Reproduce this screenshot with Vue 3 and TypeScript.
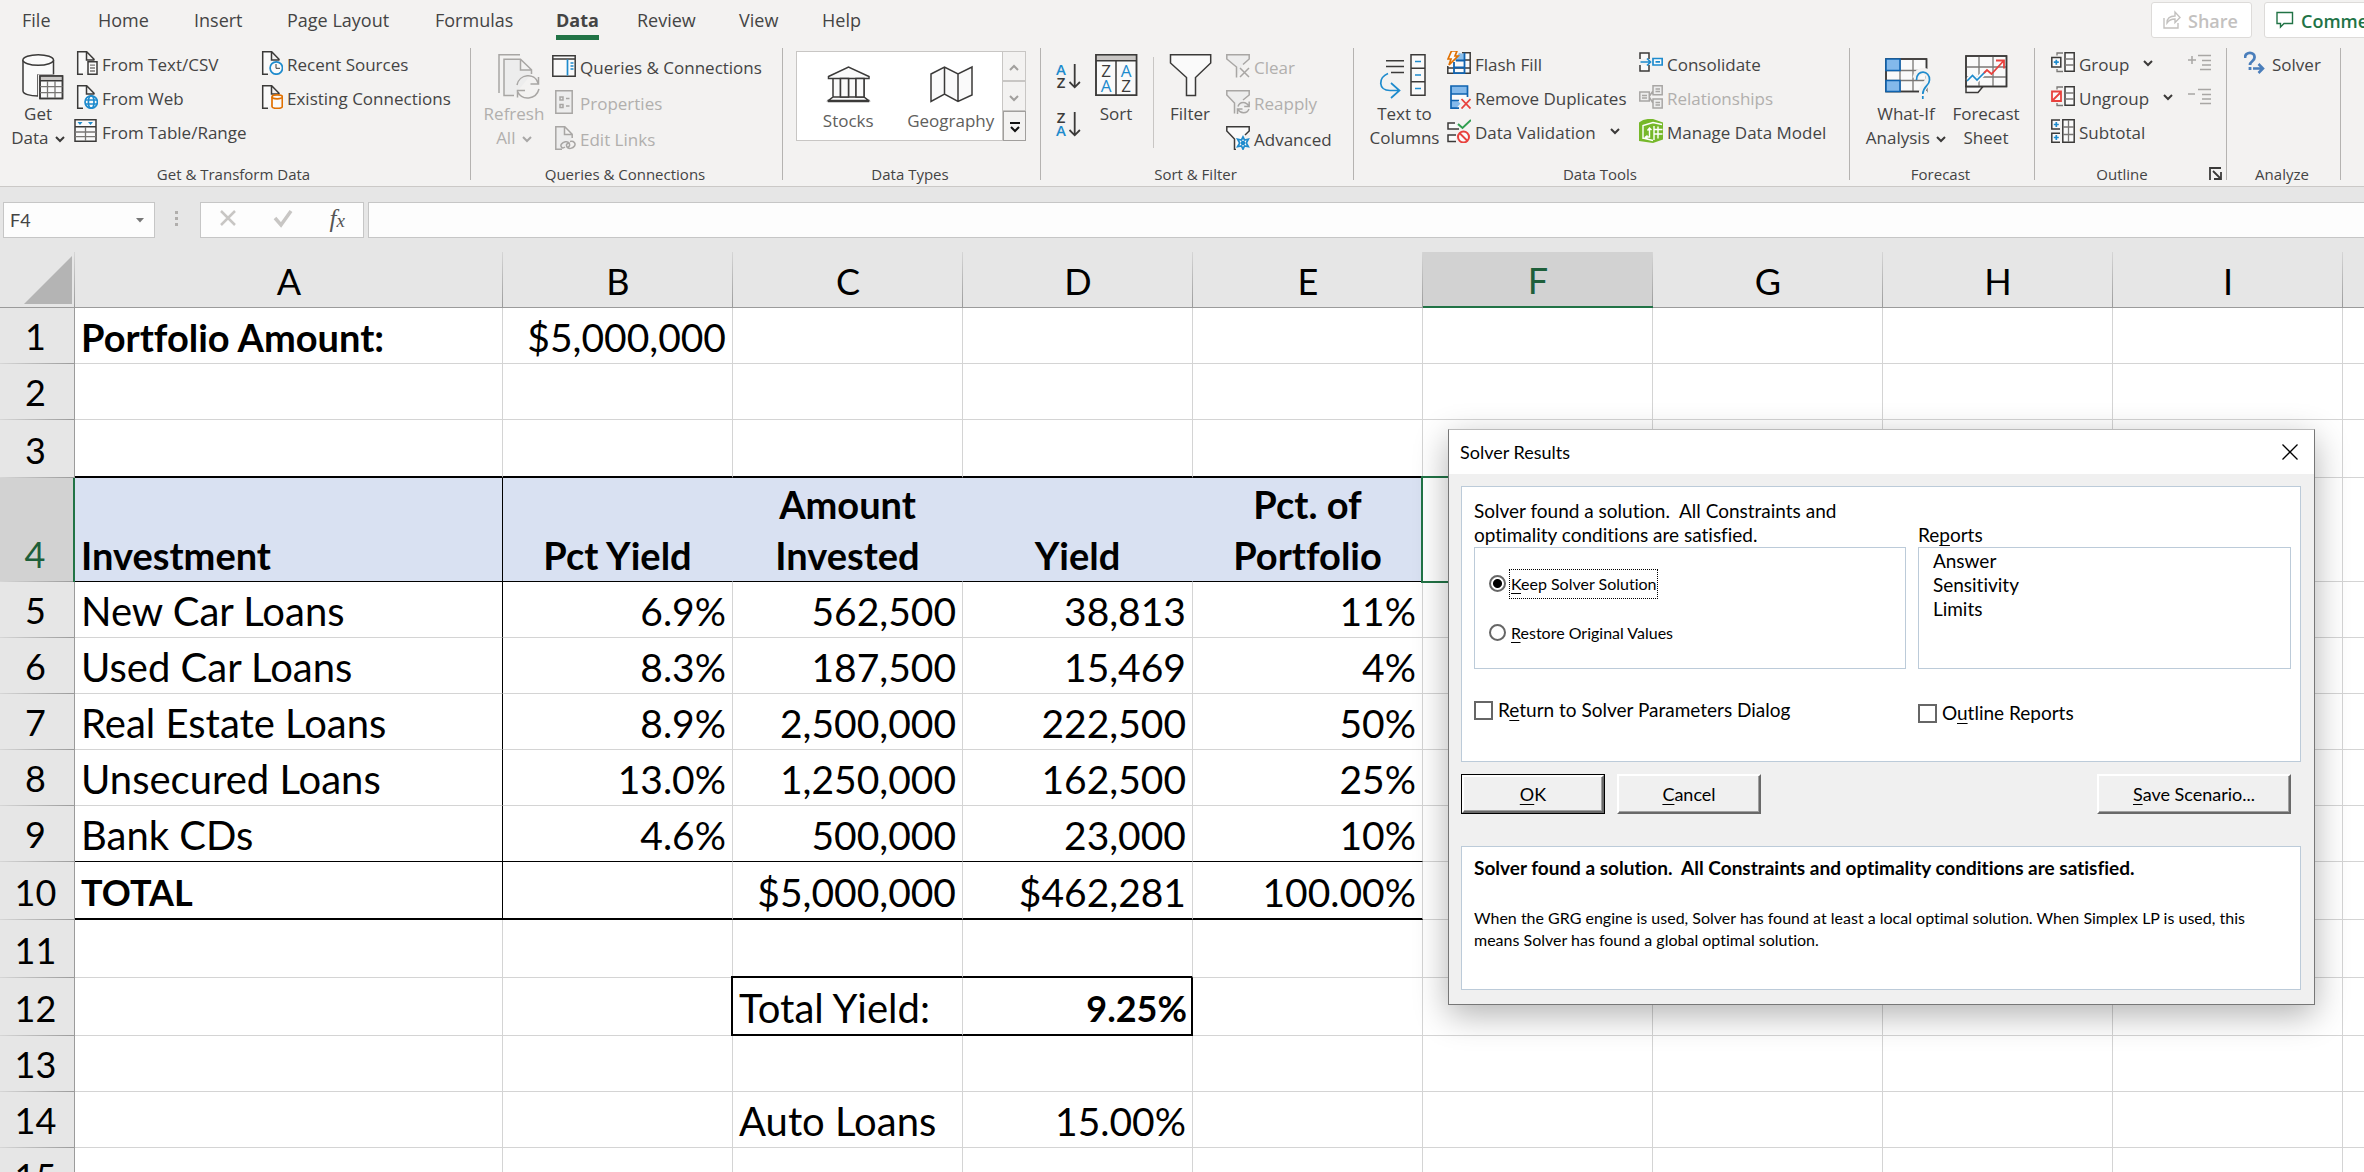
<script setup lang="ts">
import { ref } from 'vue'

interface Command {
  icon: string
  label: string
  disabled?: boolean
  menu?: boolean
}

interface Cell {
  text?: string
  kind?: string
}

const tabs = ['File', 'Home', 'Insert', 'Page Layout', 'Formulas', 'Data', 'Review', 'View', 'Help']
const activeTab = ref('Data')

const importCommands: Command[] = [
  { icon: 'csv', label: 'From Text/CSV' },
  { icon: 'web', label: 'From Web' },
  { icon: 'table', label: 'From Table/Range' },
]
const sourceCommands: Command[] = [
  { icon: 'recent', label: 'Recent Sources' },
  { icon: 'existing', label: 'Existing Connections' },
]
const queryCommands: Command[] = [
  { icon: 'queries', label: 'Queries & Connections' },
  { icon: 'properties', label: 'Properties', disabled: true },
  { icon: 'links', label: 'Edit Links', disabled: true },
]
const filterCommands: Command[] = [
  { icon: 'clear', label: 'Clear', disabled: true },
  { icon: 'reapply', label: 'Reapply', disabled: true },
  { icon: 'advanced', label: 'Advanced' },
]
const toolCommands: Command[] = [
  { icon: 'flash', label: 'Flash Fill' },
  { icon: 'duplicates', label: 'Remove Duplicates' },
  { icon: 'validation', label: 'Data Validation', menu: true },
]
const modelCommands: Command[] = [
  { icon: 'consolidate', label: 'Consolidate' },
  { icon: 'relationships', label: 'Relationships', disabled: true },
  { icon: 'model', label: 'Manage Data Model' },
]
const outlineCommands: Command[] = [
  { icon: 'group', label: 'Group', menu: true },
  { icon: 'ungroup', label: 'Ungroup', menu: true },
  { icon: 'subtotal', label: 'Subtotal' },
]

const columns = ['A', 'B', 'C', 'D', 'E', 'F', 'G', 'H', 'I']

const content: Record<string, Cell> = {
  A1: { text: 'Portfolio Amount:', kind: 'title' },
  B1: { text: '$5,000,000', kind: 'num' },
  A4: { text: 'Investment', kind: 'title' },
  B4: { text: 'Pct Yield', kind: 'title mid' },
  C4: { text: 'Amount\nInvested', kind: 'title mid' },
  D4: { text: 'Yield', kind: 'title mid' },
  E4: { text: 'Pct. of\nPortfolio', kind: 'title mid' },
  A10: { text: 'TOTAL', kind: 'bold' },
  C10: { text: '$5,000,000', kind: 'num' },
  D10: { text: '$462,281', kind: 'num' },
  E10: { text: '100.00%', kind: 'num' },
  C12: { text: 'Total Yield:' },
  D12: { text: '9.25%', kind: 'num bold' },
  C14: { text: 'Auto Loans' },
  D14: { text: '15.00%', kind: 'num' },
}

const investments = [
  ['New Car Loans', '6.9%', '562,500', '38,813', '11%'],
  ['Used Car Loans', '8.3%', '187,500', '15,469', '4%'],
  ['Real Estate Loans', '8.9%', '2,500,000', '222,500', '50%'],
  ['Unsecured Loans', '13.0%', '1,250,000', '162,500', '25%'],
  ['Bank CDs', '4.6%', '500,000', '23,000', '10%'],
]
investments.forEach((line, i) => {
  line.forEach((text, c) => {
    content[columns[c] + (i + 5)] = { text, kind: c ? 'num' : '' }
  })
})

const rows = Array.from({ length: 15 }, (_, i) => i + 1)
const tallRows = [3, 10, 11, 12]

function cellClass(col: string, row: number): string {
  const list = [content[col + row]?.kind ?? '']
  const inTable = 'ABCDE'.includes(col)
  if (inTable && row === 4) list.push('shade')
  if (inTable && (row === 3 || row === 10)) list.push('thick')
  if (inTable && (row === 4 || row === 9)) list.push('thin')
  if (col === 'A' && row >= 4 && row <= 10) list.push('edge')
  if ('CD'.includes(col) && (row === 11 || row === 12)) list.push('thick')
  if (col + row === 'C12') list.push('box-start')
  if (col + row === 'D12') list.push('box-end')
  if (col + row === 'F4') list.push('active')
  return list.join(' ')
}

const choice = ref('keep')
const reports = ['Answer', 'Sensitivity', 'Limits']
</script>

<template>
  <div class="app">
    <svg class="sprite" aria-hidden="true">
      <symbol id="i-chevron" viewBox="0 0 10 10"><path class="line" d="M1 3l4 4 4-4" stroke-width="2" /></symbol>
      <symbol id="i-csv" viewBox="0 0 24 24">
        <path class="k" d="M9 23.3H3.7V.8h9l7.8 8M12.5 1v8h8" />
        <path class="k" d="M14 10.7h9v12.5h-9z" /><path class="g" d="M16 14.2h5M16 17h5M16 20h5" />
      </symbol>
      <symbol id="i-web" viewBox="0 0 24 24">
        <path class="k" d="M9 23.3H3.7V.8h9l7.8 8M12.5 1v8h8" />
        <circle class="b" cx="17.2" cy="17" r="6.2" /><ellipse class="b nofill" cx="17.2" cy="17" rx="2.8" ry="6.2" />
        <path class="b" d="M11.5 15h11.5M11.5 19h11.5" />
      </symbol>
      <symbol id="i-table" viewBox="0 0 24 24">
        <path class="k" d="M1 .8h21v21.4H1zM1 7.8h21" /><path class="g" d="M1 13h21M1 17.6h21M11.5 8v14" />
        <path fill="#1e8bcd" d="M3.5 3h5L6 6zM14 3h5l-2.500 3z" />
      </symbol>
      <symbol id="i-recent" viewBox="0 0 24 24">
        <path class="k" d="M9 23.3H3.7V.8h9l7.8 8M12.500 1v8h8" />
        <circle class="b" cx="17.300" cy="17" r="6.200" /><path class="line" d="M17 13v4.300h4" />
      </symbol>
      <symbol id="i-existing" viewBox="0 0 24 24">
        <path class="k" d="M9 23.3H3.7V.8h9l7.8 8M12.500 1v8h8" />
        <path class="o" d="M13 12v9.500c0 2.500 10.300 2.500 10.300 0V12" /><ellipse class="o" cx="18.200" cy="11.800" rx="5.200" ry="2" />
      </symbol>
      <symbol id="i-queries" viewBox="0 0 24 24">
        <path class="k" d="M.8 1.800h22.400v20.400H.8zM.8 5h22.400" /><path class="b" stroke-width="2" d="M15.500 5.500V21.500M18.500 9h3M18.500 12h3M18.500 15h3" />
      </symbol>
      <symbol id="i-properties" viewBox="0 0 24 24">
        <path class="d" d="M3.800.8h16.400v22.400H3.800z" /><path class="d" d="M8 7h3v3H8zM8 14.500h3v3H8zM14 8.500h3.500M14 16h3.500" />
      </symbol>
      <symbol id="i-links" viewBox="0 0 24 24">
        <path class="d" d="M10 23.200H3.800V.8h9l7.400 7.400V12M12.500 1v7.500h7.500" />
        <path class="d nofill" d="M13 21c-3 2.500-5-1-3.500-3s6-3.500 7.500-1 0 4-2 4.500M18 15.500c4-1 6 2 4.500 4.500s-6 3.500-7.500 1 .5-4 2.500-4" />
      </symbol>
      <symbol id="i-clear" viewBox="0 0 24 24">
        <path class="d" d="M10.500 23.500V13L.8 5V.8h22.400V5L17 10.500" /><path class="d" d="M14 14l9 9M23 14l-9 9" />
      </symbol>
      <symbol id="i-reapply" viewBox="0 0 24 24">
        <path class="d" d="M8.500 23.500V13L.8 5V.8h22.400V5L17 10" />
        <path class="d" d="M12 16.500c1.500-5.500 8.500-5.500 11 0M23.200 11.500v5h-5M23 19c-2 5-8.500 5-11 .5M11.500 24v-5h5" />
      </symbol>
      <symbol id="i-advanced" viewBox="0 0 24 24">
        <path class="k" d="M10 23.500H8.500V13L.8 5V.8h22.400V5L19 9" />
        <path class="b" stroke-width="2" d="M17 11l1.500 3 3.800-.8-2 3.800 2 3.600-3.800-.6-1.500 3.200-1.500-3.200-3.900.6 2.100-3.600-2.100-3.800 3.900.8z" />
        <circle cx="17" cy="17" r="2.300" fill="#1e8bcd" />
      </symbol>
      <symbol id="i-flash" viewBox="0 0 24 24">
        <path class="k" d="M.8 15v7.200h22.400V1.800H15M.8 17h22.400M13 9h10" />
        <path d="M7 10h10.500V3L12 2z" fill="#8cbfea" />
        <path d="M17.500 1.800v20.400H7V11M7 16.500h10.500M9 9.500h8.500" fill="none" stroke="#0f63b0" stroke-width="1.800" />
        <path class="o" d="M4.500 0h5.500L8 5h3L2 14l2-6H1z" fill="#fbd5a8" />
      </symbol>
      <symbol id="i-duplicates" viewBox="0 0 24 24">
        <path d="M4 1h16.500v8H4zM4 15.500h6l3.500 3-4 4.500H4z" fill="#83b9eb" /><path d="M4 9.500h16.500v5H4z" fill="#fafafa" />
        <path d="M20.500 12V1H4v22.200h8M4 9h16.500M4 15.500h8" fill="none" stroke="#0f63b0" stroke-width="1.700" />
        <path class="r" d="M14.500 14l9 9.500M23.500 14l-9 9.500" />
      </symbol>
      <symbol id="i-validation" viewBox="0 0 24 24">
        <path class="k" d="M8 4H1v6h11M9 16H1v6.500h8" /><path d="M11 5l4.500 4L24 1" fill="none" stroke="#2f9e4f" stroke-width="2" />
        <circle cx="16.500" cy="18" r="5.500" fill="#fafafa" stroke="#e8413d" stroke-width="2" /><path class="r" stroke-width="2" d="M12.500 14l8 8" />
      </symbol>
      <symbol id="i-consolidate" viewBox="0 0 24 24">
        <path class="k" d="M1 8V2h9v6M1 14v6h9v-6" /><path class="b" stroke-width="2" d="M1.500 11H11M8 7.500l3.500 3.500L8 14.500M14 7.500h9.200v6.500H14zM16.500 10.800h4.500" />
      </symbol>
      <symbol id="i-relationships" viewBox="0 0 24 24">
        <path class="d" d="M.8 7h9.500v9H.8zM14 .8h9.200v9H14zM14 14h9.200v9H14zM3 10.500h5M3 13h5M16.500 4h4.500M16.500 6.500h4.500M16.500 17.500h4.500M16.500 20h4.500M10.500 11L14 6M10.500 12.500L14 18" />
      </symbol>
      <symbol id="i-model" viewBox="0 0 24 24">
        <path d="M0 3.500C4 .5 8-.5 14 0l10 3.500v17l-10 3.500-14-2z" fill="#76b82a" />
        <path d="M4 20V6.500L14 3.500l9 2M4 19l10 2.500M15 7v14M19 7.500v12M15 10.500h8.500M15 15h8.500M7 18h3.500V9.500M8.500 11.500l2-2.500 2 2M8.500 16.500L6.500 18l2 2" fill="none" stroke="#fff" stroke-width="1.400" />
      </symbol>
      <symbol id="i-group" viewBox="0 0 24 24">
        <path class="g" d="M6 4.500V2h6M6 18v2.500h6" /><path class="k" d="M.8 6.500h9v9.500h-9zM14 1.800h9.200v18.500H14z" /><path class="g" d="M14 8h9M14 14h9" />
        <path class="b" stroke-width="2" d="M5.300 8.700v5M2.800 11.200h5" />
      </symbol>
      <symbol id="i-ungroup" viewBox="0 0 24 24">
        <path class="g" d="M6 4.500V2h6M6 18v2.500h6" /><path class="k" d="M14 1.800h9.200v18.500H14z" /><path class="g" d="M14 8h9M14 14h9" />
        <path class="r" stroke-width="2" d="M1 6.500h9v9.500H1zM2 15l7.500-7.500" />
      </symbol>
      <symbol id="i-subtotal" viewBox="0 0 24 24">
        <path class="k" d="M9 1H.8v9H9M9 14.200H.8v9H9M11.800.8h11.400v22.400H11.800z" /><path class="g" d="M12 8h11M12 15.500h11M17.500 1v22" />
        <path class="b" stroke-width="2" d="M5.300 3v5M2.800 5.500h5M5.300 16v5M2.800 18.500h5" />
      </symbol>
      <symbol id="i-solver" viewBox="0 0 24 24">
        <path d="M1 7c0-7 10-6.500 9.500-.5 0 4-4.500 3.500-4.500 7.500M6 16v3" fill="none" stroke="#4a7ebb" stroke-width="2.800" />
        <path d="M9 17.500h10M14.500 13l4.500 4.500-4.500 4.500" fill="none" stroke="#4a7ebb" stroke-width="2.500" />
      </symbol>
    </svg>

    <header class="ribbon">
      <div class="tabbar">
        <nav class="tabs">
          <button v-for="tab in tabs" :key="tab" type="button" class="tab" :class="{ on: tab === activeTab }" @click="activeTab = tab">{{ tab }}</button>
        </nav>
        <div class="share-area">
          <button type="button" class="pill share" disabled>
            <svg width="18" height="18" viewBox="0 0 18 18"><path d="M1 7v10h14v-5M4 12c0-5 3-7 8-7V1l5 5.500-5 5V8c-4 0-6 1-8 4z" fill="none" stroke="#c3c1bf" stroke-width="1.400" /></svg>
            <span>Share</span>
          </button>
          <button type="button" class="pill comments">
            <svg width="18" height="18" viewBox="0 0 18 18"><path d="M1 1.500h15.500v11H8L4.500 16v-3.500H1z" fill="none" stroke="#217346" stroke-width="1.400" /></svg>
            <span>Comments</span>
          </button>
        </div>
      </div>

      <div class="groups">
        <section class="group get">
          <div class="body">
            <button type="button" class="big">
              <svg width="48" height="48">
                <path class="k" d="M9 6v31c0 3 7 5 15 5V21h15.500V6" /><path d="M24 43V20.500h17V44z" fill="#f3f2f1" />
                <ellipse class="k" cx="24.200" cy="6" rx="15.300" ry="5.300" />
                <path class="k" d="M26 22h22.500v22.500H26z" /><path d="M26.500 22.500h21.500V26H26.500z" fill="#c8c6c4" />
                <path class="k nofill" d="M26 22h22.500v22.500H26zM26 26.700h22.500" /><path class="g" d="M26 32.700h22.500M26 38.700h22.500M33.500 27v17M41 27v17" />
              </svg>
              <span>Get</span><span>Data <svg class="chev"><use href="#i-chevron" /></svg></span>
            </button>
            <div class="stack first">
              <button v-for="c in importCommands" :key="c.label" type="button" class="cmd"><svg class="ico"><use :href="'#i-' + c.icon" /></svg><span>{{ c.label }}</span></button>
            </div>
            <div class="stack">
              <button v-for="c in sourceCommands" :key="c.label" type="button" class="cmd"><svg class="ico"><use :href="'#i-' + c.icon" /></svg><span>{{ c.label }}</span></button>
            </div>
          </div>
          <div class="caption"><span>Get &amp; Transform Data</span></div>
        </section>

        <section class="group query">
          <div class="body">
            <button type="button" class="big" disabled>
              <svg width="48" height="48">
                <path class="d nofill" d="M9 39V.8h21" /><path class="d" d="M24 41.500H14V5.200h16.500l11 10.500V20M30.500 5.500v10.500h11" />
                <path class="d nofill" d="M27 31c2-11 18-13 21-2M48.500 23v7h-8M49 35c-3 11-17 12-21.500 2.500M27.500 43.500v-7H35" />
              </svg>
              <span>Refresh</span><span>All <svg class="chev"><use href="#i-chevron" /></svg></span>
            </button>
            <div class="stack loose">
              <button v-for="c in queryCommands" :key="c.label" type="button" class="cmd" :disabled="c.disabled"><svg class="ico"><use :href="'#i-' + c.icon" /></svg><span>{{ c.label }}</span></button>
            </div>
          </div>
          <div class="caption"><span>Queries &amp; Connections</span></div>
        </section>

        <section class="group types">
          <div class="body">
            <div class="gallery">
              <button type="button" class="tile">
                <svg width="48" height="40"><path class="k" d="M4.500 10.500L24.500 1 45 10.500v2H4.500zM9 12.500h7.500V31H9zM24.500 12.500H32V31h-7.500zM40 12.500V31M9 31h31l4.500 3.500H4.500zM4.500 33.500v2h40v-2" /><path class="k" d="M16.500 12.500h8V31h-8zM32 12.500h8V31h-8z" /></svg>
                Stocks
              </button>
              <button type="button" class="tile">
                <svg width="48" height="40"><path class="k" d="M4 8l13.500-7L31 8l14-7v28l-14 6.500L17.500 28 4 35.500zM17.500 1v27M31 8v27.500" /></svg>
                Geography
              </button>
            </div>
            <div class="spin">
              <button type="button" aria-label="Scroll up"><svg width="10" height="10"><path d="M1 7l4-4 4 4" fill="none" stroke="#a19f9d" stroke-width="2" /></svg></button>
              <button type="button" aria-label="Scroll down"><svg width="10" height="10"><path d="M1 3l4 4 4-4" fill="none" stroke="#a19f9d" stroke-width="2" /></svg></button>
              <button type="button" aria-label="More data types" class="more"><svg width="12" height="12"><path d="M1 2h10M2 6l4 4 4-4" fill="none" stroke="#111" stroke-width="2" /></svg></button>
            </div>
          </div>
          <div class="caption"><span>Data Types</span></div>
        </section>

        <section class="group sort">
          <div class="body">
            <div class="order">
              <button type="button" aria-label="Sort A to Z"><svg width="24" height="26"><text x="5" y="12" class="az blue">A</text><text x="5" y="25" class="az">Z</text><path class="line" d="M18.700 1v23M13.500 19l5.200 5.300 5.200-5.300" stroke-width="1.800" /></svg></button>
              <button type="button" aria-label="Sort Z to A"><svg width="24" height="26"><text x="5" y="12" class="az">Z</text><text x="5" y="25" class="az blue">A</text><path class="line" d="M18.700 1v23M13.500 19l5.200 5.300 5.200-5.300" stroke-width="1.800" /></svg></button>
            </div>
            <button type="button" class="big">
              <svg width="48" height="48">
                <path class="k" d="M4 .8h40.500v40.500H4z" /><path d="M4.500 1.500h39.500v5H4.500z" fill="#c8c6c4" /><path class="k nofill" d="M4 .8h40.500v40.500H4zM4 6.800h40.500M24 7v34" />
                <text x="14" y="23" class="za">Z</text><text x="34" y="23" class="za blue">A</text><text x="14" y="38" class="za blue">A</text><text x="34" y="38" class="za">Z</text>
              </svg>
              <span>Sort</span>
            </button>
            <i class="rule"></i>
            <button type="button" class="big wide">
              <svg width="48" height="48"><path class="k" d="M4.500.8h40.200V9L29.500 23.500v18h-9v-18L4.500 9z" /></svg>
              <span>Filter</span>
            </button>
            <div class="stack loose">
              <button v-for="c in filterCommands" :key="c.label" type="button" class="cmd" :disabled="c.disabled"><svg class="ico"><use :href="'#i-' + c.icon" /></svg><span>{{ c.label }}</span></button>
            </div>
          </div>
          <div class="caption"><span>Sort &amp; Filter</span></div>
        </section>

        <section class="group tools">
          <div class="body">
            <button type="button" class="big">
              <svg width="48" height="48">
                <path class="line" d="M5 6.700h18M5 12.500h18M10 18.500h13" stroke-width="1.600" />
                <path class="b nofill" stroke-width="2" d="M7 19.500c-10 4-10 17 2 17h9M10 29l8.500 7.500L10 44" />
                <path class="k" d="M30 .8h14v40.500H30zM30 14.200h14M30 27.800h14" /><path class="b" stroke-width="2" d="M34 7.500h6M34 21h6M34 34.500h6" />
              </svg>
              <span>Text to</span><span>Columns</span>
            </button>
            <div class="stack first">
              <button v-for="c in toolCommands" :key="c.label" type="button" class="cmd"><svg class="ico"><use :href="'#i-' + c.icon" /></svg><span>{{ c.label }}</span><svg v-if="c.menu" class="chev"><use href="#i-chevron" /></svg></button>
            </div>
            <div class="stack">
              <button v-for="c in modelCommands" :key="c.label" type="button" class="cmd" :disabled="c.disabled"><svg class="ico"><use :href="'#i-' + c.icon" /></svg><span>{{ c.label }}</span></button>
            </div>
          </div>
          <div class="caption"><span>Data Tools</span></div>
        </section>

        <section class="group forecast">
          <div class="body">
            <button type="button" class="big">
              <svg width="48" height="48">
                <path class="k" d="M4 5h40.500v32.500H4z" /><path class="g" d="M4 16.500h40M4 26.500h40M18 5v32M31 5v32" /><path class="k nofill" d="M4 5h40.500v32.500H4z" />
                <path d="M4 5h14v11.500H4zM4 26.500h14v11H4z" fill="#83b9eb" stroke="#0f63b0" stroke-width="1.600" />
                <path d="M34 24c1-9 14-9 13 0 0 6-6.500 6-6.500 14" fill="none" stroke="#f3f2f1" stroke-width="7" /><path d="M37 37h8v9h-8z" fill="#f3f2f1" />
                <path class="b nofill" stroke-width="2.500" d="M34.500 26c0-11 13.500-10 13 0 0 6-6.700 6-6.700 14M40.800 42v3" />
              </svg>
              <span>What-If</span><span>Analysis <svg class="chev"><use href="#i-chevron" /></svg></span>
            </button>
            <button type="button" class="big wide">
              <svg width="48" height="48">
                <path class="k" d="M4 32.500h17l-5 6H4z" /><path class="k" d="M4 2h40.500v30.500H4z" /><path class="g" d="M4 13h40M4 23h40M17 2v30M31 2v30" />
                <path d="M5 27l5.500-5.500 4.500 4.500 8-8" fill="none" stroke="#fafafa" stroke-width="5" />
                <path class="b nofill" stroke-width="2" d="M5 27l5.500-5.500 4.500 4.500 8-8" /><path class="r nofill" stroke-width="2" d="M22 19l3-3 4.500 4L41 7.500M34 6.500h8v8" />
                <path class="k nofill" d="M4 2h40.500v30.500H4z" />
              </svg>
              <span>Forecast</span><span>Sheet</span>
            </button>
          </div>
          <div class="caption"><span>Forecast</span></div>
        </section>

        <section class="group outline">
          <div class="body">
            <div class="stack first">
              <button v-for="c in outlineCommands" :key="c.label" type="button" class="cmd"><svg class="ico"><use :href="'#i-' + c.icon" /></svg><span>{{ c.label }}</span><svg v-if="c.menu" class="chev"><use href="#i-chevron" /></svg></button>
            </div>
            <div class="stack">
              <button type="button" class="cmd" aria-label="Show Detail" disabled><svg class="ico" viewBox="0 0 24 24"><path class="d" d="M0 9h8M4 5v8M10 4.500h13M14 9.500h9M14 14h9M12 18.500h11" /></svg></button>
              <button type="button" class="cmd" aria-label="Hide Detail" disabled><svg class="ico" viewBox="0 0 24 24"><path class="d" d="M0 9h7M10 4.500h13M14 9.500h9M14 14h9M12 18.500h11" /></svg></button>
            </div>
          </div>
          <div class="caption"><span>Outline</span><button type="button" class="launch" aria-label="Outline settings"><svg width="13" height="13"><path d="M1 13V1h11M4 4l7 7M12 5v7H5" fill="none" stroke="#3b3a39" stroke-width="1.800" /></svg></button></div>
        </section>

        <section class="group analyze">
          <div class="body">
            <div class="stack">
              <button type="button" class="cmd"><svg class="ico"><use href="#i-solver" /></svg><span>Solver</span></button>
            </div>
          </div>
          <div class="caption"><span>Analyze</span></div>
        </section>
      </div>
    </header>

    <div class="formula">
      <div class="namebox">
        <input type="text" value="F4" aria-label="Name Box" />
        <svg width="8" height="5"><path d="M0 0h8L4 4.500z" fill="#777" /></svg>
      </div>
      <svg class="dots" width="4" height="16"><path d="M0 0h3v3H0zM0 6h3v3H0zM0 12h3v3H0z" fill="#b0aeac" /></svg>
      <div class="fxbox">
        <button type="button" aria-label="Cancel entry"><svg width="18" height="18"><path d="M2 2l14 14M16 2L2 16" stroke="#c8c6c4" stroke-width="2.500" /></svg></button>
        <button type="button" aria-label="Enter"><svg width="20" height="18"><path d="M2 9l6 7L18 2" fill="none" stroke="#c8c6c4" stroke-width="3.500" /></svg></button>
        <button type="button" aria-label="Insert Function" class="fx">f<small>x</small></button>
      </div>
      <input class="entry" type="text" aria-label="Formula Bar" />
    </div>

    <main class="sheet">
      <table>
        <colgroup>
          <col class="c-head" /><col class="c-a" /><col v-for="c in columns.slice(1)" :key="c" class="c-n" /><col />
        </colgroup>
        <thead>
          <tr>
            <th class="corner"><svg width="48" height="48"><path d="M48 0v48H0z" fill="#b4b4b4" /></svg></th>
            <th v-for="c in columns" :key="c" scope="col" :class="{ picked: c === 'F' }">{{ c }}</th>
            <th class="rest"></th>
          </tr>
        </thead>
        <tbody>
          <tr v-for="r in rows" :key="r" :class="{ tall: tallRows.includes(r), head: r === 4 }">
            <th scope="row" :class="{ picked: r === 4 }">{{ r }}</th>
            <td v-for="c in columns" :key="c" :class="cellClass(c, r)">{{ content[c + r]?.text }}</td>
            <td class="rest"></td>
          </tr>
        </tbody>
      </table>
    </main>

    <div class="dialog" role="dialog" aria-labelledby="dialog-title">
      <div class="titlebar">
        <span id="dialog-title">Solver Results</span>
        <button type="button" aria-label="Close"><svg width="16" height="16"><path d="M.5.5l15 15M15.500.5l-15 15" stroke="#000" stroke-width="1.300" /></svg></button>
      </div>
      <div class="panel result">
        <div class="left">
          <p>Solver found a solution.&nbsp; All Constraints and<br />optimality conditions are satisfied.</p>
          <div class="frame">
            <label class="opt"><input v-model="choice" type="radio" name="solution" value="keep" /><span class="focus"><u>K</u>eep Solver Solution</span></label>
            <label class="opt"><input v-model="choice" type="radio" name="solution" value="restore" /><span><u>R</u>estore Original Values</span></label>
          </div>
          <label class="check"><input type="checkbox" /><span>R<u>e</u>turn to Solver Parameters Dialog</span></label>
        </div>
        <div class="right">
          <label class="listlabel" for="reports">Re<u>p</u>orts</label>
          <select id="reports" class="frame" multiple size="4">
            <option v-for="r in reports" :key="r">{{ r }}</option>
          </select>
          <label class="check"><input type="checkbox" /><span>O<u>u</u>tline Reports</span></label>
        </div>
      </div>
      <div class="actions">
        <button type="button" class="btn default"><span><u>O</u>K</span></button>
        <button type="button" class="btn"><span><u>C</u>ancel</span></button>
        <button type="button" class="btn save"><span><u>S</u>ave Scenario...</span></button>
      </div>
      <div class="panel note">
        <strong>Solver found a solution.&nbsp; All Constraints and optimality conditions are satisfied.</strong>
        <p>When the GRG engine is used, Solver has found at least a local optimal solution. When Simplex LP is used, this means Solver has found a global optimal solution.</p>
      </div>
    </div>
  </div>
</template>

<style>
body {
  margin: 0;
  background: #e6e6e6;
}
</style>

<style scoped>
.app {
  position: relative;
  display: flex;
  flex-direction: column;
  height: 100vh;
  overflow: hidden;
  background: #e6e6e6;
  color: #444;
  font-family: "Open Sans", sans-serif;
  font-size: 17px;
  font-variant-ligatures: none;
}
.sprite {
  position: absolute;
  width: 0;
  height: 0;
}
button,
input,
select {
  font: inherit;
  color: inherit;
}
button {
  background: none;
  border: 0;
  padding: 0;
  margin: 0;
}
svg {
  overflow: visible;
  flex: none;
}
.k { fill: #fafafa; stroke: #3b3a39; stroke-width: 1.5px; }
.g { fill: none; stroke: #797775; stroke-width: 1.3px; }
.b { fill: #fafafa; stroke: #1e8bcd; stroke-width: 1.7px; }
.o { fill: #fafafa; stroke: #e07000; stroke-width: 1.7px; }
.d { fill: #ededed; stroke: #a8a6a4; stroke-width: 1.5px; }
.r { fill: #fafafa; stroke: #e8413d; stroke-width: 1.8px; }
.line { fill: none; stroke: #3b3a39; }
.nofill { fill: none; }
.az, .za { text-anchor: middle; fill: #3b3a39; font-size: 15px; font-weight: 600; }
.za { font-size: 17px; font-weight: 400; }
.blue { fill: #1e8bcd; }

/* Ribbon */
.ribbon {
  flex: none;
  background: #f3f2f1;
  border-bottom: 1px solid #cbc9c7;
}
.tabbar {
  display: flex;
  justify-content: space-between;
  height: 46px;
}
.tabs {
  display: grid;
  grid-template-columns: 76px 96px 93px 148px 121px 81px 102px 83px 60px;
  padding-left: 22px;
  height: 40px;
  justify-items: start;
}
.tab {
  font-size: 18px;
  padding-top: 5px;
  height: 40px;
  line-height: 30px;
  border-bottom: 5px solid transparent;
  box-sizing: border-box;
  white-space: nowrap;
}
.tab.on {
  font-weight: 700;
  border-color: #217346;
}
.share-area {
  display: flex;
  gap: 12px;
  width: 213px;
  padding-top: 2px;
}
.pill {
  flex: none;
  display: flex;
  align-items: center;
  gap: 7px;
  height: 36px;
  padding: 0 11px;
  box-sizing: border-box;
  background: #fff;
  border: 1px solid #dddbd9;
  border-radius: 3px;
  font-size: 18px;
  font-weight: 600;
}
.pill span { padding-top: 2px; }
.share { width: 101px; }
.pill.share { color: #c3c1bf; }
.comments { color: #217346; }

.groups {
  display: flex;
  height: 140px;
}
.group {
  flex: none;
  box-sizing: border-box;
  display: flex;
  flex-direction: column;
  background: linear-gradient(#b5b3b1, #b5b3b1) right 2px / 1px 132px no-repeat;
}
.get { width: 471px; }
.query { width: 312px; }
.types { width: 258px; }
.sort { width: 313px; }
.tools { width: 496px; }
.forecast { width: 185px; }
.outline { width: 192px; }
.analyze { width: 114px; }
.body {
  display: flex;
  height: 117px;
}
.get .body { padding-left: 2px; }
.query .body { padding-left: 5px; }
.types .body { padding-left: 13px; }
.sort .body { padding-left: 4px; }
.tools .body { padding-left: 8px; }
.forecast .body { padding-left: 12px; }
.outline .body { padding-left: 16px; }
.analyze .body { padding-left: 17px; }
.caption {
  display: flex;
  padding-right: 4px;
  font-size: 15px;
  line-height: 23px;
}
.caption span { flex: 1; text-align: center; }
.launch { margin: 4px 1px 0 0; line-height: 13px; height: 13px; }
.big {
  display: flex;
  flex-direction: column;
  align-items: center;
  width: 76px;
  padding-top: 8px;
  line-height: 24px;
  white-space: nowrap;
}
.get .big { width: 72px; }
.sort .big { width: 50px; }
.tools .big { width: 85px; }
.forecast .big { width: 88px; }
.group .big.wide { width: 72px; }
.chev {
  width: 10px;
  height: 10px;
  margin-left: 2px;
}
.cmd .chev { margin-left: 10px; }
.stack { display: flex; flex-direction: column; }
.get .first { width: 185px; }
.tools .first { width: 192px; }
.outline .first { width: 137px; }
.stack.loose { padding-top: 2px; }
.cmd {
  display: flex;
  align-items: center;
  height: 34px;
  gap: 4px;
  white-space: nowrap;
}
.loose .cmd { height: 36px; }
.cmd span { padding-top: 3px; }
.ico { width: 24px; height: 24px; }
button:disabled { color: #b1afad; }
.big:disabled .chev { opacity: .4; }
.gallery {
  display: flex;
  width: 207px;
  height: 90px;
  margin-top: 5px;
  box-sizing: border-box;
  background: #fff;
  border: 1px solid #c8c6c4;
}
.tile {
  flex: 1;
  display: flex;
  flex-direction: column;
  align-items: center;
  padding-top: 14px;
  line-height: 30px;
  color: #605e5c;
}
.spin {
  display: flex;
  flex-direction: column;
  width: 23px;
  margin-top: 5px;
}
.spin button {
  height: 30px;
  border: 1px solid #c8c6c4;
  border-left: 0;
}
.spin .more { border: 1px solid #a19f9d; }
.order { width: 46px; padding-top: 8px; }
.order button { display: block; height: 48px; width: 46px; }
.rule {
  width: 1px;
  height: 91px;
  margin: 11px 0 0 12px;
  background: #c8c6c4;
}

/* Formula bar */
.formula {
  flex: none;
  display: flex;
  height: 36px;
  padding: 15px 0 14px 3px;
}
.namebox, .fxbox, .entry {
  box-sizing: border-box;
  background: #fdfdfd;
  border: 1px solid #c6c6c6;
}
.namebox {
  display: flex;
  align-items: center;
  width: 152px;
  padding: 0 10px 0 6px;
}
.namebox input {
  flex: 1;
  min-width: 0;
  border: 0;
  padding: 0;
  background: none;
  font-family: Lato, sans-serif;
  font-size: 18px;
}
.dots { margin: 9px 21px 0 20px; }
.fxbox {
  display: flex;
  align-items: center;
  justify-content: space-around;
  width: 164px;
  margin-right: 4px;
}
.fx {
  font: italic 400 25px "Liberation Serif", serif;
  line-height: 30px;
  color: #555;
}
.fx small { font-size: 19px; }
.entry { flex: 1; border-right: 0; }

/* Worksheet */
.sheet { flex: 1; min-height: 0; overflow: hidden; }
table {
  table-layout: fixed;
  width: 100%;
  min-width: 2344px;
  border-spacing: 0;
  background: #fff;
  color: #000;
  font-family: Lato, sans-serif;
  font-size: 40px;
  line-height: 51px;
}
.c-head { width: 75px; }
.c-a { width: 428px; }
.c-n { width: 230px; }
th, td {
  box-sizing: border-box;
  padding: 0 6px;
  height: 56px;
  vertical-align: bottom;
  white-space: pre-line;
}
th {
  padding: 0;
  font-size: 36px;
  font-weight: 400;
  text-align: center;
}
thead th {
  background: linear-gradient(#d6d6d6, #9b9b9b) right / 1px 100% no-repeat #e6e6e6;
  border-bottom: 1px solid #9b9b9b;
}
tbody th {
  padding: 0 3px 2px 0;
  background: linear-gradient(90deg, #d6d6d6, #9b9b9b) bottom / 100% 1px no-repeat #e6e6e6;
  border-right: 1px solid #9b9b9b;
}
.corner { text-align: right; line-height: 0; }
.corner svg { margin: 0 3px 3px 0; }
thead .picked { background-color: #d2d2d2; color: #1e5f3a; border-bottom: 2px solid #217346; }
tbody .picked { background-color: #d2d2d2; color: #1e5f3a; border-right: 2px solid #217346; }
td {
  border-right: 1px solid #d4d4d4;
  border-bottom: 1px solid #d4d4d4;
}
td.rest { border-right: 0; }
thead .rest { background: #e6e6e6; }
.tall th, .tall td { height: 58px; }
.head th, .head td { height: 104px; }
.num { text-align: right; font-size: 39px; }
.title { font-size: 38px; font-weight: 700; }
.bold { font-size: 36px; font-weight: 700; }
.mid { text-align: center; }
.shade { background: #d9e1f2; border-right-color: #d9e1f2; }
.thick { border-bottom: 2px solid #000; }
.thin { border-bottom: 1px solid #000; }
.edge { border-right: 1px solid #000; }
.box-end { border-right: 2px solid #000; padding-right: 4px; }
.box-start, .active { position: relative; }
.box-start::before {
  content: "";
  position: absolute;
  inset: -2px auto -2px -2px;
  width: 2px;
  background: #000;
}
.active::before {
  content: "";
  position: absolute;
  inset: -2px;
  border: 2px solid #217346;
}

/* Solver dialog */
.dialog {
  position: absolute;
  left: 1448px;
  top: 429px;
  width: 867px;
  box-sizing: border-box;
  padding-bottom: 14px;
  background: #f0f0f0;
  border: 1px solid #777;
  border-top-color: #bbb;
  color: #000;
  font-family: Lato, sans-serif;
  font-size: 19px;
  line-height: 24px;
  box-shadow: 0 10px 32px rgba(0, 0, 0, .3);
}
.titlebar {
  display: flex;
  justify-content: space-between;
  align-items: center;
  height: 44px;
  padding: 0 16px 0 11px;
  background: #fff;
  font-size: 18px;
}
.titlebar button { height: 16px; line-height: 0; }
.panel {
  margin: 12px 13px 0 12px;
  box-sizing: border-box;
  background: #fff;
  border: 1px solid #bccbd9;
}
.result {
  display: flex;
  gap: 12px;
  height: 276px;
  padding: 12px 9px 0 12px;
}
p { margin: 0; }
.left { flex: 433; display: flex; flex-direction: column; }
.right { flex: 374; display: flex; flex-direction: column; }
.frame {
  box-sizing: border-box;
  height: 122px;
  background: #fff;
  border: 1px solid #bccbd9;
}
.left .frame { padding: 21px 0 0 14px; }
.opt {
  display: flex;
  align-items: center;
  height: 29px;
  margin-bottom: 20px;
  font-size: 16px;
}
.opt span { padding: 2px 1px; border: 1px solid transparent; margin-left: 3px; }
.opt .focus { border: 1px dotted #000; }
input[type="radio"], input[type="checkbox"] {
  appearance: none;
  box-sizing: border-box;
  flex: none;
  margin: 0;
  width: 17px;
  height: 17px;
  border: 2px solid #666;
  border-radius: 50%;
  background: #fff;
}
input[type="radio"]:checked {
  background: radial-gradient(circle, #000 4px, #fff 5px);
}
input[type="checkbox"] {
  width: 19px;
  height: 19px;
  border-radius: 0;
}
.check {
  display: flex;
  align-items: center;
  gap: 5px;
  margin-top: 29px;
}
.right .check { margin-top: 32px; }
.listlabel { margin-top: 24px; }
select.frame {
  appearance: none;
  margin: 0;
  padding: 1px 0 0 14px;
  border-radius: 0;
  outline: 0;
  overflow: hidden;
}
option { padding: 0; height: 24px; line-height: 24px; }
u {
  text-decoration-thickness: 1px;
  text-underline-offset: 3px;
}
.actions {
  display: flex;
  gap: 12px;
  padding: 12px 23px 0 12px;
  font-size: 18px;
}
.btn {
  width: 144px;
  height: 40px;
  box-sizing: border-box;
  background: #f0f0f0;
  border: 2px solid;
  border-color: #fff #696969 #696969 #fff;
  box-shadow: inset -1px -1px #a0a0a0;
}
.default { outline: 1px solid #000; outline-offset: -1px; border-width: 3px; }
.save { width: 194px; margin-left: auto; }
.note {
  height: 144px;
  margin-top: 32px;
  padding: 9px 12px 0;
}
.note p { margin-top: 27px; font-size: 16px; line-height: 22px; }
.note strong { display: block; }
</style>
